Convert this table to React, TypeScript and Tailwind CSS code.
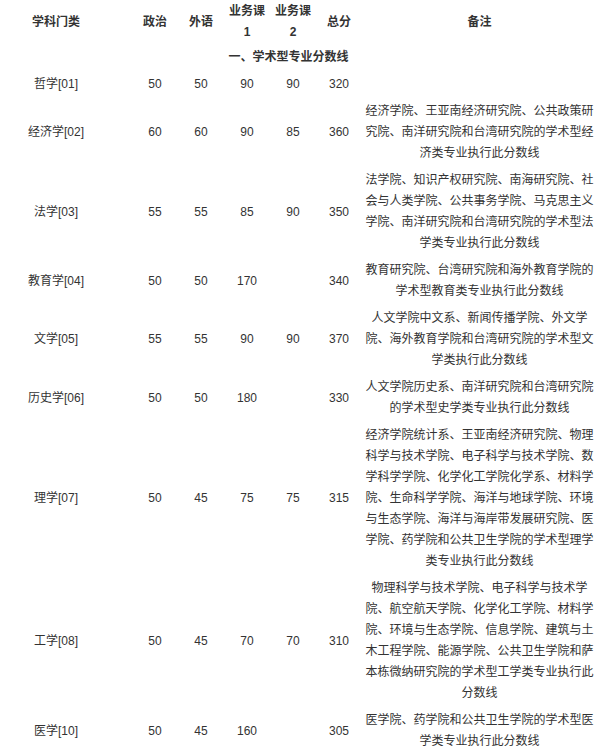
import React from "react";

type Row = {
  name: string;
  a: string;
  b: string;
  c: string;
  d: string;
  total: string;
  note: string;
};

const rows: Row[] = [
  { name: "哲学[01]", a: "50", b: "50", c: "90", d: "90", total: "320", note: "" },
  {
    name: "经济学[02]",
    a: "60",
    b: "60",
    c: "90",
    d: "85",
    total: "360",
    note: "经济学院、王亚南经济研究院、公共政策研究院、南洋研究院和台湾研究院的学术型经济类专业执行此分数线",
  },
  {
    name: "法学[03]",
    a: "55",
    b: "55",
    c: "85",
    d: "90",
    total: "350",
    note: "法学院、知识产权研究院、南海研究院、社会与人类学院、公共事务学院、马克思主义学院、南洋研究院和台湾研究院的学术型法学类专业执行此分数线",
  },
  {
    name: "教育学[04]",
    a: "50",
    b: "50",
    c: "170",
    d: "",
    total: "340",
    note: "教育研究院、台湾研究院和海外教育学院的学术型教育类专业执行此分数线",
  },
  {
    name: "文学[05]",
    a: "55",
    b: "55",
    c: "90",
    d: "90",
    total: "370",
    note: "人文学院中文系、新闻传播学院、外文学院、海外教育学院和台湾研究院的学术型文学类执行此分数线",
  },
  {
    name: "历史学[06]",
    a: "50",
    b: "50",
    c: "180",
    d: "",
    total: "330",
    note: "人文学院历史系、南洋研究院和台湾研究院的学术型史学类专业执行此分数线",
  },
  {
    name: "理学[07]",
    a: "50",
    b: "45",
    c: "75",
    d: "75",
    total: "315",
    note: "经济学院统计系、王亚南经济研究院、物理科学与技术学院、电子科学与技术学院、数学科学学院、化学化工学院化学系、材料学院、生命科学学院、海洋与地球学院、环境与生态学院、海洋与海岸带发展研究院、医学院、药学院和公共卫生学院的学术型理学类专业执行此分数线",
  },
  {
    name: "工学[08]",
    a: "50",
    b: "45",
    c: "70",
    d: "70",
    total: "310",
    note: "物理科学与技术学院、电子科学与技术学院、航空航天学院、化学化工学院、材料学院、环境与生态学院、信息学院、建筑与土木工程学院、能源学院、公共卫生学院和萨本栋微纳研究院的学术型工学类专业执行此分数线",
  },
  {
    name: "医学[10]",
    a: "50",
    b: "45",
    c: "160",
    d: "",
    total: "305",
    note: "医学院、药学院和公共卫生学院的学术型医学类专业执行此分数线",
  },
];

const grid = "grid grid-cols-[132px_46px_46px_46px_46px_46px_235px] items-center";

export default function App() {
  return (
    <div
      className="w-[597px] bg-white text-[12px] leading-[21px] text-[#333333] -mt-[2px]"
      style={{ fontFamily: '"Liberation Sans", Arial, "Noto Sans CJK SC", sans-serif' }}
    >
      <div className={`${grid} font-bold pt-[3px] pb-[1px]`}>
        <div className="text-center pr-[20px]">学科门类</div>
        <div className="text-center">政治</div>
        <div className="text-center">外语</div>
        <div className="text-center">
          业务课
          <br />1
        </div>
        <div className="text-center">
          业务课
          <br />2
        </div>
        <div className="text-center">总分</div>
        <div className="text-center">备注</div>
      </div>
      <div className="font-bold text-center py-[3px] pr-[20px]">一、学术型专业分数线</div>
      {rows.map((r) => (
        <div key={r.name} className={`${grid} py-[3px]`}>
          <div className="text-center pr-[20px]">{r.name}</div>
          <div className="text-center">{r.a}</div>
          <div className="text-center">{r.b}</div>
          <div className="text-center">{r.c}</div>
          <div className="text-center">{r.d}</div>
          <div className="text-center">{r.total}</div>
          <div className="text-center px-[3px]">{r.note || "\u00a0"}</div>
        </div>
      ))}
    </div>
  );
}
